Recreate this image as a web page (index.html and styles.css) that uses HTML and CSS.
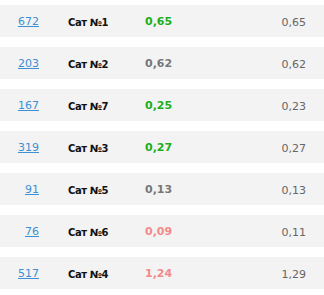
FILE: index.html
```html
<!DOCTYPE html>
<html>
<head>
<meta charset="utf-8">
<link rel="stylesheet" href="styles.css">
</head>
<body>
<div class="list">
  <div class="row"><a class="num" href="#">672</a><span class="name">Сат №1</span><span class="val good">0,65</span><span class="ref">0,65</span></div>
  <div class="row"><a class="num" href="#">203</a><span class="name">Сат №2</span><span class="val mid">0,62</span><span class="ref">0,62</span></div>
  <div class="row"><a class="num" href="#">167</a><span class="name">Сат №7</span><span class="val good">0,25</span><span class="ref">0,23</span></div>
  <div class="row"><a class="num" href="#">319</a><span class="name">Сат №3</span><span class="val good">0,27</span><span class="ref">0,27</span></div>
  <div class="row"><a class="num" href="#">91</a><span class="name">Сат №5</span><span class="val mid">0,13</span><span class="ref">0,13</span></div>
  <div class="row"><a class="num" href="#">76</a><span class="name">Сат №6</span><span class="val bad">0,09</span><span class="ref">0,11</span></div>
  <div class="row"><a class="num" href="#">517</a><span class="name">Сат №4</span><span class="val bad">1,24</span><span class="ref">1,29</span></div>
</div>
</body>
</html>
```
FILE: styles.css
```css
html, body {
  margin: 0;
  padding: 0;
  background: #fff;
}
body {
  font-family: "DejaVu Sans", Verdana, sans-serif;
  font-size: 11px;
}
.list {
  display: flex;
  flex-direction: column;
  gap: 10px;
  padding-top: 5px;
}
.row {
  display: grid;
  grid-template-columns: 39px 106px 1fr auto;
  align-items: center;
  height: 32px;
  background: #f3f3f3;
}
.num {
  text-align: right;
  color: #3d8fd6;
  text-decoration: underline;
}
.name {
  padding-left: 29px;
  font-weight: bold;
  font-size: 10px;
  letter-spacing: -0.4px;
  color: #111;
  padding-top: 3px;
}
.val {
  font-weight: bold;
}
.good { color: #1aaf1a; }
.mid { color: #777; }
.bad { color: #f38a8a; }
.ref {
  color: #666;
  padding-right: 18px;
  padding-top: 2px;
}
```
